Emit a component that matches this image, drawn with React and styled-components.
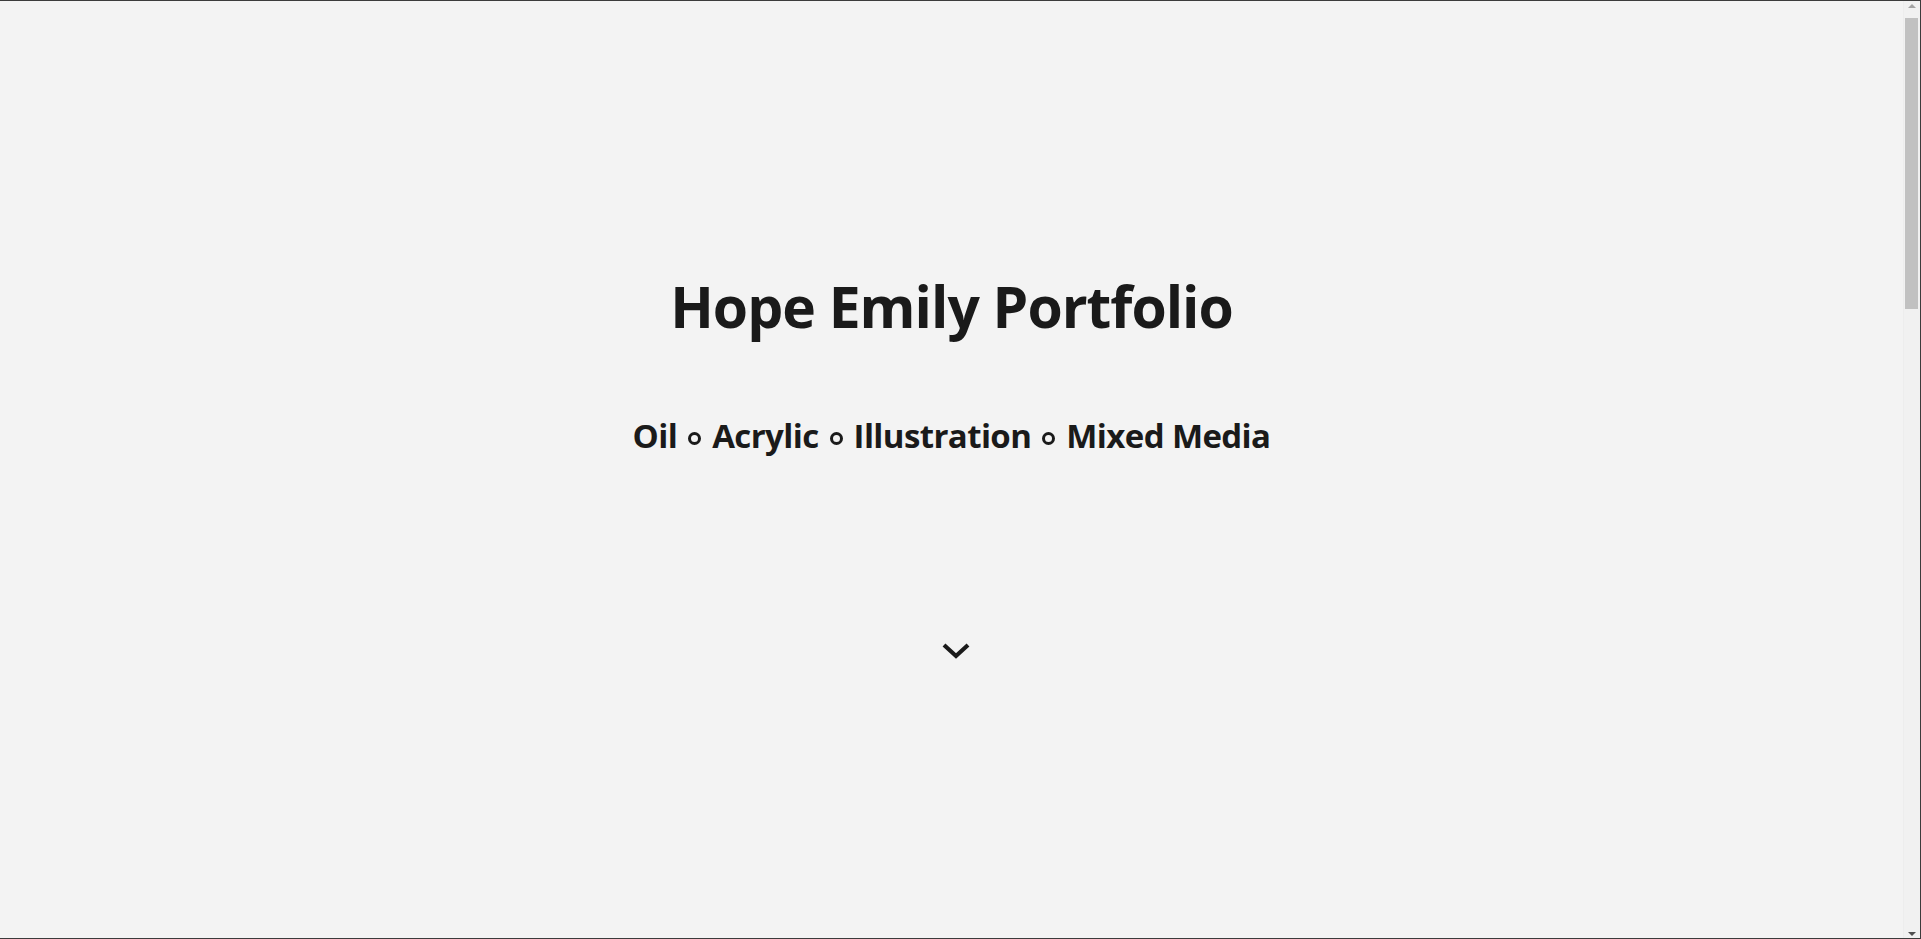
import React from "react";
import styled, { createGlobalStyle } from "styled-components";

const GlobalStyle = createGlobalStyle`
  html, body {
    margin: 0;
    padding: 0;
    background: #f3f3f3;
    overflow: hidden;
  }
  body {
    font-family: "Open Sans", "Noto Sans", "Liberation Sans", sans-serif;
    color: #1a1a1a;
  }
`;

const Frame = styled.div`
  height: 100vh;
  display: flex;
  box-sizing: border-box;
  border-top: 1px solid #3b3b3b;
  border-right: 1px solid #3b3b3b;
  border-bottom: 1px solid #3b3b3b;
`;

const Main = styled.main`
  flex: 1;
  min-width: 0;
  overflow-y: auto;
  scrollbar-width: none;
  &::-webkit-scrollbar {
    display: none;
  }
`;

const ScrollBar = styled.div`
  width: 17px;
  flex: none;
  display: flex;
  flex-direction: column;
  background: #f1f1f1;
  border-left: 1px solid #ededed;
  box-sizing: border-box;
`;

const Arrow = styled.div`
  height: 17px;
  flex: none;
  display: flex;
  align-items: center;
  justify-content: center;

  &::before {
    content: "";
    width: 0;
    height: 0;
    border-left: 4px solid transparent;
    border-right: 4px solid transparent;
    ${({ $down }) =>
      $down
        ? "border-top: 4px solid #505050; margin-top: 8px;"
        : "border-bottom: 4px solid #a3a3a3; margin-top: -7px;"}
  }
`;

const Track = styled.div`
  flex: 1;
  padding: 0 2px 0 1px;
`;

const Thumb = styled.div`
  height: 291px;
  background: #c1c1c1;
`;

const Hero = styled.section`
  height: 937px;
  display: flex;
  flex-direction: column;
  align-items: center;
  box-sizing: border-box;
  padding-top: 263px;
`;

const Title = styled.h1`
  margin: 0;
  font-size: 57px;
  font-weight: 700;
  line-height: 84px;
  letter-spacing: -1px;
`;

const Tagline = styled.h2`
  margin: 64px 0 0;
  font-size: 33px;
  font-weight: 700;
  line-height: 48px;
  letter-spacing: -0.6px;
`;

const Dot = styled.span`
  display: inline-block;
  width: 13px;
  height: 13px;
  box-sizing: border-box;
  border: 3px solid #1a1a1a;
  border-radius: 50%;
  margin: 0 11px;
  vertical-align: 3px;
`;

const ScrollHint = styled.a`
  margin: 181px 0 0 9px;
  display: block;
  width: 30px;
  height: 20px;
  cursor: pointer;
`;

const Gallery = styled.section`
  height: 1980px;
`;

const media = ["Oil", "Acrylic", "Illustration", "Mixed Media"];

export default function App() {
  return (
    <Frame>
      <GlobalStyle />
      <Main>
        <Hero>
          <Title>Hope Emily Portfolio</Title>
          <Tagline>
            {media.map((m, i) => (
              <React.Fragment key={m}>
                {i > 0 && <Dot />}
                {m}
              </React.Fragment>
            ))}
          </Tagline>
          <ScrollHint href="#gallery" aria-label="scroll down">
            <svg width="30" height="20" viewBox="0 0 30 20">
              <polyline
                points="3,4 15,15 27,4"
                fill="none"
                stroke="#1a1a1a"
                strokeWidth="4.2"
              />
            </svg>
          </ScrollHint>
        </Hero>
        <Gallery id="gallery" />
      </Main>
      <ScrollBar>
        <Arrow />
        <Track>
          <Thumb />
        </Track>
        <Arrow $down />
      </ScrollBar>
    </Frame>
  );
}
